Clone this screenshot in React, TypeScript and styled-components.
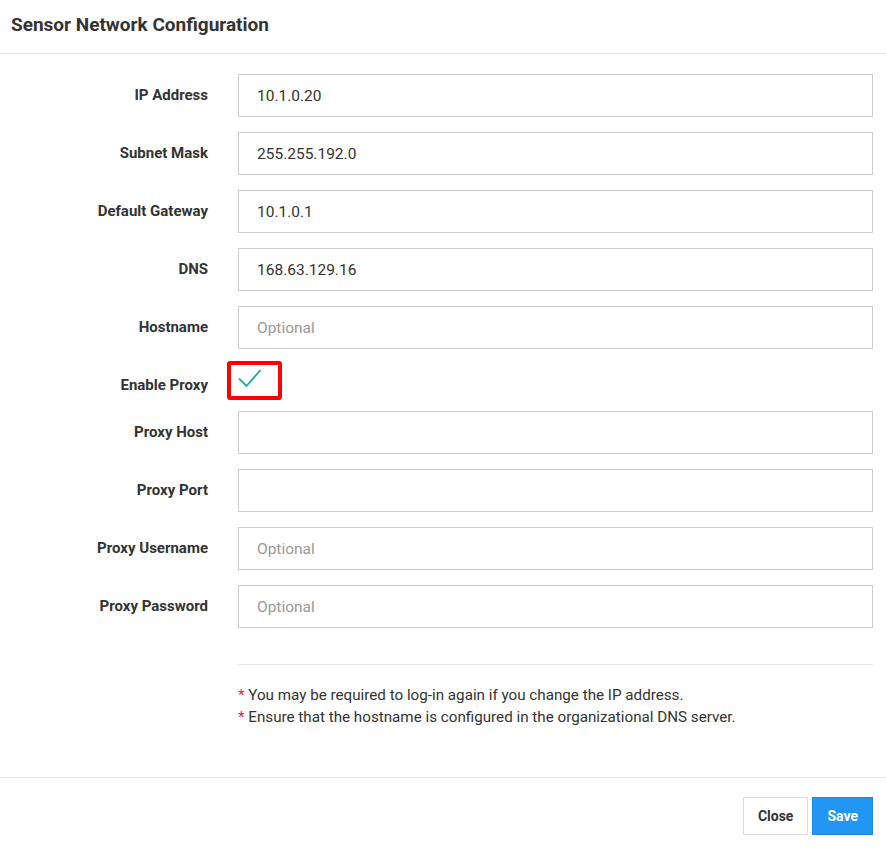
import styled, { createGlobalStyle } from 'styled-components'

const GlobalStyle = createGlobalStyle`
    body {
        margin: 0;
        background: #fff;
        font-family: Roboto, "Liberation Sans", sans-serif;
        color: #333;
    }
    * { box-sizing: border-box; }
`

type Field = {
    label: string
    value?: string
    placeholder?: string
}

const topFields: Field[] = [
    {label: 'IP Address', value: '10.1.0.20'},
    {label: 'Subnet Mask', value: '255.255.192.0'},
    {label: 'Default Gateway', value: '10.1.0.1'},
    {label: 'DNS', value: '168.63.129.16'},
    {label: 'Hostname', placeholder: 'Optional'},
]

const proxyFields: Field[] = [
    {label: 'Proxy Host'},
    {label: 'Proxy Port'},
    {label: 'Proxy Username', placeholder: 'Optional'},
    {label: 'Proxy Password', placeholder: 'Optional'},
]

const FieldRow = ({field}: { field: Field }) => (
    <>
        <Label>{field.label}</Label>
        <TextInput defaultValue={field.value} placeholder={field.placeholder}/>
    </>
)

export default function App() {
    return (
        <Modal>
            <GlobalStyle/>
            <Header>
                <Title>Sensor Network Configuration</Title>
            </Header>
            <Body>
                <Form>
                    {topFields.map(f => <FieldRow key={f.label} field={f}/>)}
                    <Label short>Enable Proxy</Label>
                    <CheckCell>
                        <Highlight/>
                        <svg width="24" height="22" viewBox="0 0 24 22">
                            <path d="M1 10.5 L8.5 18 L22.5 2" fill="none" stroke="#26a69a" strokeWidth="1.8"/>
                        </svg>
                    </CheckCell>
                    {proxyFields.map(f => <FieldRow key={f.label} field={f}/>)}
                </Form>
                <Notes>
                    <Note><Star>*</Star> You may be required to log-in again if you change the IP address.</Note>
                    <Note><Star>*</Star> Ensure that the hostname is configured in the organizational DNS server.</Note>
                </Notes>
            </Body>
            <Footer>
                <Button>Close</Button>
                <Button primary>Save</Button>
            </Footer>
        </Modal>
    )
}

const Modal = styled.div`
    width: 886px;
    height: 850px;
    display: flex;
    flex-direction: column;
`

const Header = styled.div`
    height: 54px;
    padding: 0 11px;
    display: flex;
    align-items: center;
    border-bottom: 1px solid #e6e6e6;
`

const Title = styled.h1`
    margin: 0 0 4px;
    font-size: 19px;
    font-weight: 700;
    color: #333;
`

const Body = styled.div`
    padding: 20px 13px 0 0;
    flex: 1;
`

const Form = styled.div`
    display: grid;
    grid-template-columns: 208px 1fr;
    column-gap: 30px;
    row-gap: 15px;
    align-items: center;
`

const Label = styled.div<{ short?: boolean }>`
    text-align: right;
    font-size: 15px;
    font-weight: 700;
    color: #333;
    margin-top: ${p => p.short ? '10px' : '-2px'};
`

const TextInput = styled.input`
    height: 43px;
    width: 100%;
    border: 1px solid #ccc;
    padding: 0 18px;
    font-family: Roboto, "Liberation Sans", sans-serif;
    font-size: 15.5px;
    color: #333;
    outline: none;

    &::placeholder {
        color: #999;
    }
`

const CheckCell = styled.div`
    position: relative;
    height: 32px;
    display: flex;
    align-items: flex-end;
    padding-bottom: 6px;
`

const Highlight = styled.div`
    position: absolute;
    left: -11px;
    top: -3px;
    width: 55px;
    height: 39px;
    border: 4px solid #f00;
    border-radius: 3px;
`

const Notes = styled.div`
    margin: 36px 0 0 238px;
    padding-top: 19px;
    border-top: 1px solid #e6e6e6;
`

const Note = styled.div`
    font-size: 15.2px;
    line-height: 22px;
    color: #333;
`

const Star = styled.span`
    color: #e8174f;
`

const Footer = styled.div`
    height: 73px;
    border-top: 1px solid #e6e6e6;
    display: flex;
    justify-content: flex-end;
    align-items: flex-start;
    gap: 4px;
    padding: 19px 13px 0 0;
`

const Button = styled.button<{ primary?: boolean }>`
    height: 38px;
    padding: 0 14px;
    font-family: Roboto, "Liberation Sans", sans-serif;
    font-size: 14px;
    font-weight: 700;
    color: ${p => p.primary ? '#fff' : '#333'};
    background: ${p => p.primary ? '#2196f3' : '#fff'};
    border: 1px solid ${p => p.primary ? '#1e88e5' : '#ddd'};
    cursor: pointer;
`
